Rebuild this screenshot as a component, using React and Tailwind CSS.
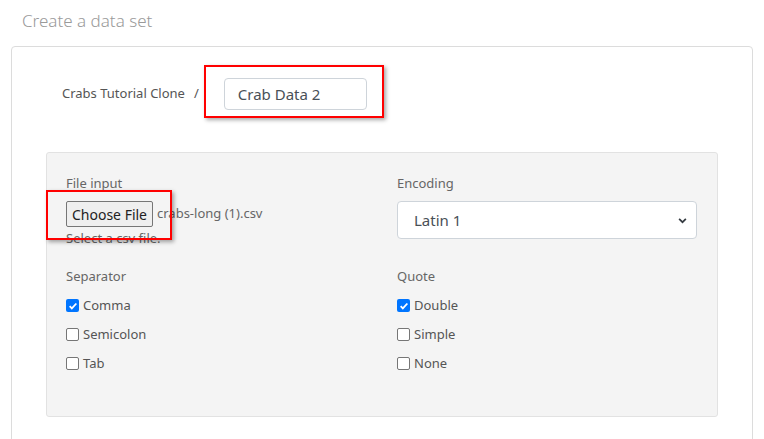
import React from "react";

const Check = ({ label, checked }) => (
  <label className="flex items-center h-[29px] text-[13px] text-[#555]">
    {checked ? (
      <span className="w-[13px] h-[13px] rounded-[2px] bg-[#0075ff] flex items-center justify-center">
        <svg viewBox="0 0 12 12" className="w-[10px] h-[10px]">
          <path d="M2 6.2l2.6 2.6L10 3" fill="none" stroke="white" strokeWidth="2.2" />
        </svg>
      </span>
    ) : (
      <span className="w-[13px] h-[13px] rounded-[2px] border border-[#767676] bg-white"></span>
    )}
    <span className="ml-[4px]">{label}</span>
  </label>
);

export default function App() {
  return (
    <div className="w-[764px] h-[439px] overflow-hidden bg-white font-['Noto_Sans',sans-serif] relative">
      <h1 className="pl-[22px] pt-[9px] text-[17px] font-light text-[#9a9a9a] leading-[24px]">
        Create a data set
      </h1>

      <div className="ml-[11px] mt-[13px] w-[742px] h-[400px] border border-[#dcdcdc] rounded-t-[4px]">
        <div className="flex items-center pl-[50px] pt-[31px]">
          <span className="text-[13px] text-[#555]">Crabs Tutorial Clone</span>
          <span className="text-[13px] text-[#555] ml-[9px]">/</span>
          <div className="ml-[25px] w-[143px] h-[32px] border border-[#ced4da] rounded-[4px] flex items-center pl-[13px] text-[15px] text-[#495057]">
            Crab Data 2
          </div>
        </div>

        <div className="ml-[34px] mt-[42px] w-[672px] h-[265px] bg-[#f4f4f4] border border-[#e2e2e2] rounded-[3px] pl-[19px] pt-[20px]">
          <div className="grid grid-cols-[300px_300px] gap-x-[31px]">
            <div>
              <div className="text-[13px] text-[#666] leading-[20px]">File input</div>
              <div className="flex items-center mt-[8px]">
                <span className="h-[26px] w-[87px] border border-[#767676] rounded-[2px] bg-[#efefef] text-[14px] text-[#222] flex items-center justify-center">
                  Choose File
                </span>
                <span className="ml-[4px] text-[13px] text-[#666]">crabs-long (1).csv</span>
              </div>
              <div className="text-[13px] text-[#666] leading-[16px] mt-[3px]">Select a csv file.</div>
            </div>
            <div>
              <div className="text-[13px] text-[#666] leading-[20px]">Encoding</div>
              <div className="mt-[8px] h-[38px] bg-white border border-[#ced4da] rounded-[4px] flex items-center justify-between pl-[16px] pr-[9px] text-[15px] text-[#495057]">
                <span>Latin 1</span>
                <svg viewBox="0 0 16 16" className="w-[9px] h-[9px]">
                  <path d="M2 5l6 6 6-6" fill="none" stroke="#343a40" strokeWidth="3" />
                </svg>
              </div>
            </div>

            <div className="mt-[20px]">
              <div className="text-[13px] text-[#666] leading-[20px] mb-[5px]">Separator</div>
              <Check label="Comma" checked />
              <Check label="Semicolon" />
              <Check label="Tab" />
            </div>
            <div className="mt-[20px]">
              <div className="text-[13px] text-[#666] leading-[20px] mb-[5px]">Quote</div>
              <Check label="Double" checked />
              <Check label="Simple" />
              <Check label="None" />
            </div>
          </div>
        </div>
      </div>

      <div className="absolute left-[204px] top-[65px] w-[180px] h-[53px] border-2 border-[#ff0000] shadow-[2px_2px_4px_rgba(0,0,0,0.35)]"></div>
      <div className="absolute left-[46px] top-[190px] w-[126px] h-[50px] border-2 border-[#ff0000] shadow-[2px_2px_4px_rgba(0,0,0,0.35)]"></div>
    </div>
  );
}
